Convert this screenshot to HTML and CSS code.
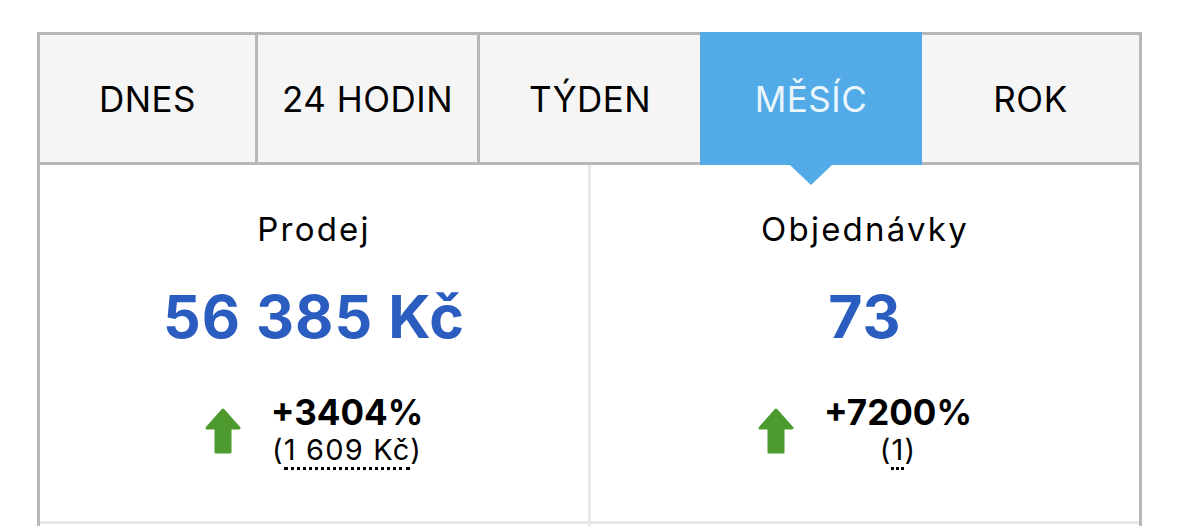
FILE: index.html
```html
<!DOCTYPE html>
<html lang="cs">
<head>
<meta charset="utf-8">
<title>Statistiky</title>
<link rel="stylesheet" href="styles.css">
</head>
<body>
<div class="panel">
  <div class="tabs">
    <div class="tab">DNES</div>
    <div class="tab">24 HODIN</div>
    <div class="tab">TÝDEN</div>
    <div class="tab active">MĚSÍC</div>
    <div class="tab">ROK</div>
  </div>
  <div class="stats">
    <div class="stat">
      <div class="stat-title">Prodej</div>
      <div class="stat-value">56 385 Kč</div>
      <div class="change">
        <svg class="arrow" viewBox="0 0 36 47" width="36" height="47" aria-hidden="true">
          <polygon points="18,3 34,21 25,21 25,45 11,45 11,21 2,21" />
        </svg>
        <div class="change-text">
          <div class="pct">+3404%</div>
          <div class="abs">(<span class="dotted">1 609 Kč</span>)</div>
        </div>
      </div>
    </div>
    <div class="stat">
      <div class="stat-title">Objednávky</div>
      <div class="stat-value">73</div>
      <div class="change">
        <svg class="arrow" viewBox="0 0 36 47" width="36" height="47" aria-hidden="true">
          <polygon points="18,3 34,21 25,21 25,45 11,45 11,21 2,21" />
        </svg>
        <div class="change-text">
          <div class="pct">+7200%</div>
          <div class="abs">(<span class="dotted">1</span>)</div>
        </div>
      </div>
    </div>
  </div>
  <div class="stats next">
    <div class="stat empty"></div>
    <div class="stat empty"></div>
  </div>
</div>
</body>
</html>
```

FILE: styles.css
```css
html, body {
  margin: 0;
  padding: 0;
  background: #ffffff;
  overflow: hidden;
}

body {
  font-family: Inter, "Noto Sans", "Liberation Sans", sans-serif;
  color: #000;
}

.panel {
  margin: 32px 0 0 37px;
  width: 1105px;
  box-sizing: border-box;
  border: 3px solid #b7b7b7;
  border-bottom: none;
}

.tabs {
  display: grid;
  grid-template-columns: 215px 222px 223px 222px 1fr;
  height: 127px;
  border-bottom: 3px solid #b7b7b7;
  background: #f5f5f5;
}

.tab {
  display: flex;
  align-items: center;
  justify-content: center;
  font-size: 35px;
  letter-spacing: 0.5px;
  border-left: 3px solid #b7b7b7;
  position: relative;
}

.tab:first-child {
  border-left: none;
}

.tab.active {
  background: #52abe7;
  color: #eaf5fc;
  border-left: none;
  margin-top: -3px;
  margin-bottom: -3px;
}

.tab.active + .tab {
  border-left: none;
}

.tab.active::after {
  content: "";
  position: absolute;
  left: 50%;
  bottom: -20px;
  margin-left: -21px;
  border-left: 21px solid transparent;
  border-right: 21px solid transparent;
  border-top: 20px solid #52abe7;
}

.stats {
  display: grid;
  grid-template-columns: 548px 1fr;
  border-bottom: 3px solid #e8e8e8;
}

.stat {
  height: 356px;
  box-sizing: border-box;
  padding-top: 44px;
  display: flex;
  flex-direction: column;
  align-items: center;
}

.stat + .stat {
  border-left: 3px solid #e8e8e8;
}

.stat-title {
  font-size: 33px;
  line-height: 40px;
  letter-spacing: 2.2px;
}

.stat-value {
  margin-top: 33px;
  font-size: 59px;
  line-height: 70px;
  font-weight: 700;
  letter-spacing: 1px;
  color: #2b5cc0;
}

.change {
  margin-top: 41px;
  display: flex;
  align-items: center;
  gap: 30px;
}

.arrow {
  display: block;
  fill: #4d9a2f;
  stroke: #4d9a2f;
  stroke-width: 3;
  stroke-linejoin: round;
}

.change-text {
  text-align: center;
}

.pct {
  font-size: 35px;
  line-height: 38px;
  font-weight: 700;
}

.abs {
  font-size: 29px;
  line-height: 37px;
  letter-spacing: 1.2px;
}

.dotted {
  border-bottom: 3px dotted #000;
}

.next .stat {
  height: 200px;
}
```
